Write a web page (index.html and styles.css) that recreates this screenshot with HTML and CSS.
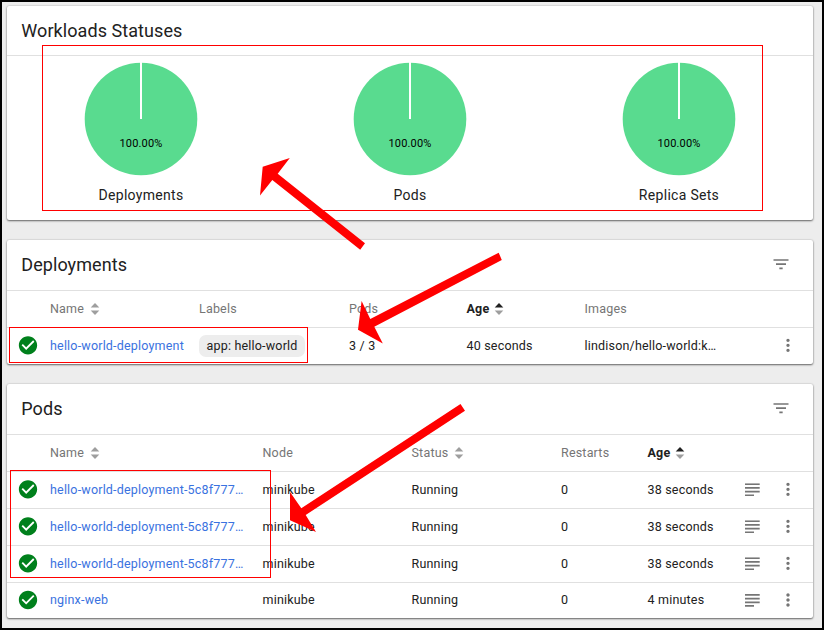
FILE: index.html
```html
<!DOCTYPE html>
<html lang="en">
<head>
<meta charset="utf-8">
<title>Workloads</title>
<link rel="stylesheet" href="styles.css">
</head>
<body>
<svg class="defs" width="0" height="0" aria-hidden="true">
  <symbol id="sort" viewBox="0 0 10 12"><path class="up" d="M5 0 9.3 4.6H.7z"/><path class="down" d="M.7 7.6h8.6L5 12z"/></symbol>
  <symbol id="ok" viewBox="0 0 24 24"><path d="M12 2C6.48 2 2 6.48 2 12s4.48 10 10 10 10-4.480 10-10S17.520 2 12 2zm-2 15l-5-5 1.410-1.410L10 14.170l7.590-7.590L19 8l-9 9z"/></symbol>
  <symbol id="filter" viewBox="0 0 24 24"><path d="M10 18h4v-2h-4v2zM3 6v2h18V6H3zm3 7h12v-2H6v2z"/></symbol>
  <symbol id="more" viewBox="0 0 24 24"><path d="M12 8c1.100 0 2-.9 2-2s-.9-2-2-2-2 .9-2 2 .9 2 2 2zm0 2c-1.100 0-2 .9-2 2s.9 2 2 2 2-.9 2-2-.9-2-2-2zm0 6c-1.100 0-2 .9-2 2s.9 2 2 2 2-.9 2-2-.9-2-2-2z"/></symbol>
  <symbol id="logs" viewBox="0 0 15 13"><path d="M0 0h14.700v1.800H0zM0 3.700h14.700v1.800H0zM0 7.400h14.700v1.800H0zM0 11.100h9v1.700H0z"/></symbol>
  <symbol id="pie" viewBox="0 0 114 114"><circle cx="57" cy="57" r="56.300"/><path d="M57 0v57" stroke="#fff" stroke-width="2"/></symbol>
</svg>
<main class="page">
  <section class="card statuses">
    <header class="card-head"><h2>Workloads Statuses</h2></header>
    <div class="charts">
      <figure><div class="pie"><svg><use href="#pie"/></svg><span>100.00%</span></div><figcaption>Deployments</figcaption></figure>
      <figure><div class="pie"><svg><use href="#pie"/></svg><span>100.00%</span></div><figcaption>Pods</figcaption></figure>
      <figure><div class="pie"><svg><use href="#pie"/></svg><span>100.00%</span></div><figcaption>Replica Sets</figcaption></figure>
    </div>
  </section>

  <section class="card deployments">
    <header class="card-head"><h2>Deployments</h2><svg class="filter"><use href="#filter"/></svg></header>
    <div class="row head"><span></span><span>Name<svg class="sort"><use href="#sort"/></svg></span><span>Labels</span><span>Pods</span><span class="active">Age<svg class="sort"><use href="#sort"/></svg></span><span>Images</span></div>
    <div class="row"><svg class="ok"><use href="#ok"/></svg><a>hello-world-deployment</a><span><span class="chip">app: hello-world</span></span><span>3 / 3</span><span>40 seconds</span><span>lindison/hello-world:k…</span><svg class="more"><use href="#more"/></svg></div>
  </section>

  <section class="card pods">
    <header class="card-head"><h2>Pods</h2><svg class="filter"><use href="#filter"/></svg></header>
    <div class="row head"><span></span><span>Name<svg class="sort"><use href="#sort"/></svg></span><span>Node</span><span>Status<svg class="sort"><use href="#sort"/></svg></span><span>Restarts</span><span class="active">Age<svg class="sort"><use href="#sort"/></svg></span></div>
    <div class="row"><svg class="ok"><use href="#ok"/></svg><a>hello-world-deployment-5c8f777…</a><span>minikube</span><span>Running</span><span>0</span><span>38 seconds</span><svg class="logs"><use href="#logs"/></svg><svg class="more"><use href="#more"/></svg></div>
    <div class="row"><svg class="ok"><use href="#ok"/></svg><a>hello-world-deployment-5c8f777…</a><span>minikube</span><span>Running</span><span>0</span><span>38 seconds</span><svg class="logs"><use href="#logs"/></svg><svg class="more"><use href="#more"/></svg></div>
    <div class="row"><svg class="ok"><use href="#ok"/></svg><a>hello-world-deployment-5c8f777…</a><span>minikube</span><span>Running</span><span>0</span><span>38 seconds</span><svg class="logs"><use href="#logs"/></svg><svg class="more"><use href="#more"/></svg></div>
    <div class="row"><svg class="ok"><use href="#ok"/></svg><a>nginx-web</a><span>minikube</span><span>Running</span><span>0</span><span>4 minutes</span><svg class="logs"><use href="#logs"/></svg><svg class="more"><use href="#more"/></svg></div>
  </section>

  <svg class="annotations" viewBox="0 0 824 630">
    <g fill="none" stroke="#f00">
      <rect x="42.500" y="45.500" width="720" height="165"/>
      <rect x="9.500" y="327.500" width="298" height="35"/>
      <rect x="10.500" y="470.500" width="260" height="107"/>
    </g>
    <g fill="#f00">
      <path d="M262.700 166.700 289.800 158 277.700 173.700 365 243.300 360.200 249.800 272.300 180 260 195.500z"/>
      <path d="M358 329.700 361.600 301 370.300 319 498.700 252.700 501.800 260 374.300 326.700 382.800 343.500z"/>
      <path d="M290 520.300V492L301.300 508.300 460.500 404 465 410.700 305.700 515 316 532z"/>
    </g>
  </svg>
</main>
</body>
</html>
```
FILE: styles.css
```css
* { box-sizing: border-box; }
body { margin: 0; background: #ededed; color: #212121; font: 12.5px/20px Roboto, sans-serif; letter-spacing: .19px; }
svg { display: block; fill: #757575; flex: none; }
.defs { position: absolute; }
.page { position: relative; width: 824px; height: 630px; border: 2px solid #000; padding: 4px 9px 0 5px; overflow: hidden; }
.card { background: #fff; border-radius: 2px; box-shadow: 0 1px 2px rgba(0,0,0,.55), 0 0 2px rgba(0,0,0,.2); }
.statuses { height: 214px; margin-bottom: 20px; }
.deployments { height: 124px; margin-bottom: 20px; }
.pods { height: 234px; }
.card-head { display: flex; justify-content: space-between; align-items: center; height: 51px; padding: 0 22px 0 14.300px; border-bottom: 1px solid #e0e0e0; }
.statuses .card-head { height: 50px; }
h2 { margin: 0; font-size: 18px; font-weight: 400; line-height: 24px; letter-spacing: .07px; }
.filter { width: 20px; height: 20px; transform: translateY(-.8px); }
.charts { display: grid; grid-template-columns: repeat(3, 269px); margin-left: -1px; padding-top: 6px; }
figure { margin: 0; display: flex; flex-direction: column; align-items: center; }
.pie { position: relative; width: 114px; height: 114px; }
.pie svg { width: 114px; height: 114px; fill: #59db8f; }
.pie span { position: absolute; left: 0; right: -1px; top: 72px; text-align: center; font-size: 11px; color: #000; letter-spacing: .15px; }
figcaption { margin-top: 9px; padding-left: 1px; font-size: 14px; letter-spacing: .3px; }
.row { display: grid; align-items: center; height: 37px; border-bottom: 1px solid #e0e0e0; white-space: nowrap; }
.row:last-child { height: 36px; border-bottom: 0; }
.pods .row:last-child { height: 34px; }
.deployments .row { grid-template-columns: 43px 149px 150px 117.500px 118px 186.500px 1fr; }
.pods .row { grid-template-columns: 43px 212.500px 149px 149.500px 86.500px 97.500px 26px 1fr; }
.head { color: #757575; }
.head > span { display: flex; align-items: center; }
.head .active { color: #212121; font-weight: 700; }
.sort { width: 10px; height: 12px; margin-left: 6px; fill: #9e9e9e; color: #9e9e9e; }
.active .sort { color: #212121; margin-left: 5px; }
.up { fill: currentColor; }
.row a { color: #3a72e0; }
.row > svg { transform: translateY(-.7px); }
.pods .row:last-child > svg { transform: none; }
.ok { width: 22px; height: 22px; margin-left: 10.300px; fill: #00801c; }
.more { width: 20px; height: 20px; margin-left: 7px; }
.logs { width: 15px; height: 13px; }
.chip { display: inline-block; height: 22px; line-height: 22px; padding: 0 7px 0 7.500px; border-radius: 7px; background: #ededed; }
.annotations { position: absolute; left: -2px; top: -2px; width: 824px; height: 630px; }
```
